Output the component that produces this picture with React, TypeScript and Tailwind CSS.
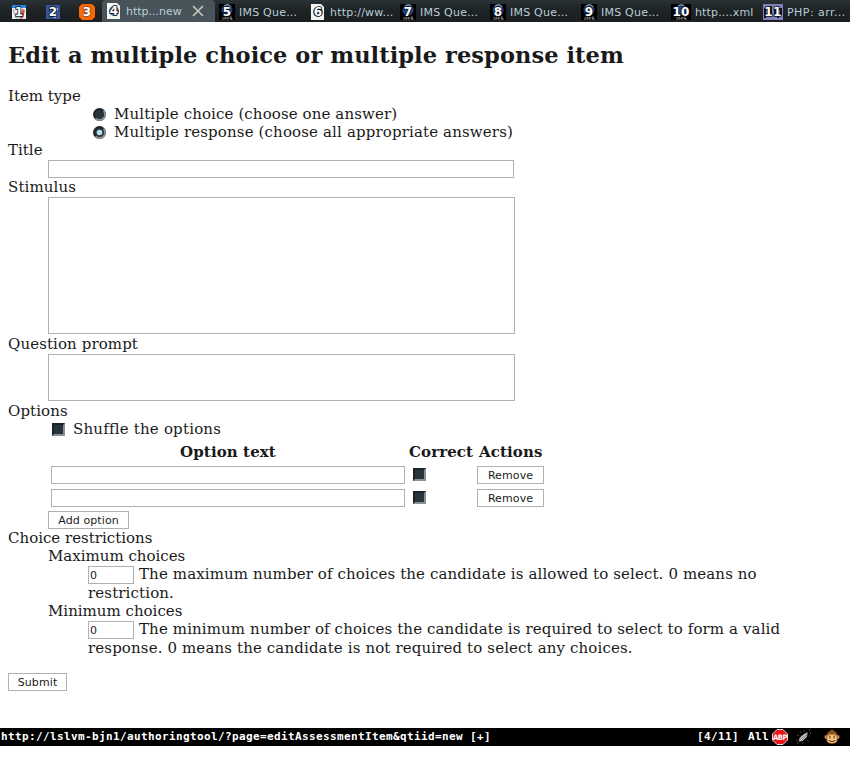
import type { ReactNode } from "react";

const sans = "font-['DejaVu_Sans',sans-serif]";
const field = "block border border-[#b0b0b0] bg-white outline-none resize-none rounded-none";
const button = `block h-[18px] border border-[#b0b0b0] bg-white pt-[1px] text-center text-[11px] leading-[15px] tracking-[0.1px] text-[#1a1a1a] ${sans}`;

function Favicon({ n, kind }: { n: number; kind: string }) {
  const wide = kind === "wide" || kind === "php";
  const mid = wide ? 10 : 8;
  return (
    <svg width={wide ? 20 : 16} height="16" viewBox={wide ? "0 0 20 16" : "0 0 16 16"} className="shrink-0">
      {kind === "mail" && (
        <>
          <rect x="1" y="2" width="14" height="13" fill="#eee" />
          <path d="M1 1h14v3H1z" fill="#2489e8" />
          <path d="M11 5l3 1-2 8-3 1z" fill="#d65347" />
          <path d="M2 5l3 9h4" stroke="#8dacbe" fill="none" />
        </>
      )}
      {kind === "blue" && (
        <>
          <rect x="1" y="1" width="14" height="14" fill="#35559b" />
          <path d="M10 4h3v2h-2v8H9V8" fill="#a8bad8" />
        </>
      )}
      {kind === "orange" && <path d="M3 0h10l3 3v10l-3 3H3l-3-3V3z" fill="#ff6600" />}
      {kind === "page" && (
        <>
          <path d="M1 0h10l3 3v13H1z" fill="#f5f5ef" />
          <circle cx="8" cy="8" r="5" fill="#4a6fae" />
          <path d="M5 5l5-2 3 4-2 5-4-1z" fill="#91764e" />
        </>
      )}
      {(kind === "ims" || kind === "wide") && (
        <>
          <rect width="20" height="16" fill="#000" />
          <circle cx={mid} cy="6" r="5.5" fill="#214484" />
          <path d={wide ? "M7 2q5-3 7 1" : "M5 2q5-3 7 1"} stroke="#a9bdd0" fill="none" />
          <path d={`M${mid - 4} 13v3m2 0v-3l1.500 2 1.500-2v3m4-3h-2v1.500h2V16h-2`} stroke="#999" strokeWidth=".8" fill="none" />
        </>
      )}
      {kind === "php" && (
        <>
          <rect width="20" height="16" fill="#8180bd" />
          <path d="M2 14V5h3v5H2M15 14V5h3v5h-3M8 2v9M12 4v7" stroke="#111" strokeWidth="2" fill="none" />
        </>
      )}
      <text
        x={mid}
        y="12"
        textAnchor="middle"
        fontSize="12"
        fontWeight="bold"
        fontFamily="DejaVu Sans"
        fill="white"
        stroke={kind === "orange" ? "#84512d" : "#08101c"}
        strokeWidth="1.6"
        paintOrder="stroke"
      >
        {n}
      </text>
    </svg>
  );
}

function Tab({ n, kind, children, className }: { n: number; kind: string; children?: ReactNode; className: string }) {
  return (
    <div className={`flex h-[22px] shrink-0 items-start ${className}`}>
      <Favicon n={n} kind={kind} />
      {children && <span className="mt-[1px] whitespace-nowrap text-[11px] leading-[16px] text-[#b9cdd8]">{children}</span>}
    </div>
  );
}

function Check() {
  return <span className="block h-[13px] w-[13px] shrink-0 border-2 border-t-[#1b2328] border-l-[#1b2328] border-r-[#8b9093] border-b-[#8b9093] bg-[#28353d]" />;
}

function Radio({ checked }: { checked?: boolean }) {
  return (
    <svg width="13" height="13" viewBox="0 0 13 13" className="shrink-0">
      <circle cx="6.5" cy="6.5" r="6.5" fill="#1b2328" />
      <path d="M11.1 1.9A6.5 6.5 0 0 1 1.9 11.1z" fill="#8b9093" />
      <circle cx="6.5" cy="6.5" r="4.6" fill="#28353d" />
      {checked && <circle cx="6.5" cy="6.5" r="2.8" fill="#b8dcf0" />}
    </svg>
  );
}

function OptionRow() {
  return (
    <div className="flex h-[18px] items-center">
      <input className={`${field} h-[18px] w-[354px]`} />
      <span className="ml-2 mb-[1px] w-[64px]"><Check /></span>
      <button className={`${button} w-[67px]`}>Remove</button>
    </div>
  );
}

function Limit({ name, first, second }: { name: string; first: string; second: string }) {
  return (
    <>
      <div className="pl-10">{name}</div>
      <div className="flex h-[19px] pl-20">
        <input className={`${field} mt-[1px] h-[18px] w-[46px] px-[1px] pt-[1px] text-[11px] text-[#1a1a1a] ${sans}`} defaultValue="0" />
        <span className="ml-[5px] whitespace-nowrap tracking-[0.12px]">{first}</span>
      </div>
      <div className="whitespace-nowrap pl-20 tracking-[0.13px]">{second}</div>
    </>
  );
}

export default function App() {
  return (
    <div className="h-[762px] w-[850px] overflow-hidden bg-white font-['DejaVu_Serif',serif] text-[15px] leading-[18px] text-[#1a1a1a]">
      <nav className={`flex h-[22px] w-full overflow-hidden bg-gradient-to-b from-[#2a3235] via-[#1d2224] to-[#1b1f21] ${sans}`}>
        <Tab n={1} kind="mail" className="w-[45px] pt-1 pl-[11px]" />
        <Tab n={2} kind="blue" className="w-[34px] pt-1" />
        <Tab n={3} kind="orange" className="w-[23px] pt-1" />
        <div className="flex w-[113px] shrink-0 rounded-t bg-[#48545a]">
          <Tab n={4} kind="page" className="gap-[4px] pt-[3px] pl-[4px]">http...new</Tab>
          <svg width="12" height="12" viewBox="0 0 12 12" className="mt-[5px] ml-[10px]">
            <path d="M1 1l10 10M11 1L1 11" stroke="#c8c8bd" strokeWidth="1.6" />
          </svg>
        </div>
        <Tab n={5} kind="ims" className="w-[91px] gap-[4px] pt-1 pl-[4px] tracking-[0.22px]">IMS Que...</Tab>
        <Tab n={6} kind="page" className="w-[90px] gap-[4px] pt-1 pl-[4px] tracking-[0.2px]">http://ww...</Tab>
        <Tab n={7} kind="ims" className="w-[90px] gap-[4px] pt-1 pl-[4px] tracking-[0.22px]">IMS Que...</Tab>
        <Tab n={8} kind="ims" className="w-[91px] gap-[4px] pt-1 pl-[4px] tracking-[0.22px]">IMS Que...</Tab>
        <Tab n={9} kind="ims" className="w-[90px] gap-[4px] pt-1 pl-[4px] tracking-[0.22px]">IMS Que...</Tab>
        <Tab n={10} kind="wide" className="w-[92px] gap-[4px] pt-1 pl-[4px] tracking-[0.15px]">http....xml</Tab>
        <Tab n={11} kind="php" className="w-[91px] gap-[4px] pt-1 pl-[4px] tracking-[0.45px]">PHP: arr...</Tab>
      </nav>

      <main className="h-[706px] px-2 pt-[19px]">
        <h1 className="mb-[18px] h-[28px] whitespace-nowrap text-[22.5px] leading-[28px] font-bold tracking-[0.075px]">Edit a multiple choice or multiple response item</h1>
        <div>Item type</div>
        <div className="flex h-[18px] items-center gap-2 pl-[85px]"><Radio /><span className="tracking-[0.11px]">Multiple choice (choose one answer)</span></div>
        <div className="flex h-[18px] items-center gap-2 pl-[85px]"><Radio checked /><span className="tracking-[0.14px]">Multiple response (choose all appropriate answers)</span></div>
        <div>Title</div>
        <input className={`${field} mt-[1px] ml-10 h-[18px] w-[466px]`} />
        <div className="tracking-[0.1px]">Stimulus</div>
        <textarea className={`${field} mt-[1px] mb-[1px] ml-10 h-[137px] w-[467px]`} />
        <div className="tracking-[0.1px]">Question prompt</div>
        <textarea className={`${field} mt-[1px] mb-[1px] ml-10 h-[47px] w-[467px]`} />
        <div className="tracking-[0.1px]">Options</div>
        <div className="flex h-[18px] items-center gap-2 pl-11"><Check /><span className="tracking-[0.2px]">Shuffle the options</span></div>
        <div className="mt-[5px] ml-[43px] flex flex-col gap-[5px]">
          <div className="flex h-[18px] font-bold tracking-[0.1px]">
            <span className="w-[354px] text-center">Option text</span>
            <span className="ml-1 w-[70px]">Correct</span>
            <span>Actions</span>
          </div>
          <OptionRow />
          <OptionRow />
        </div>
        <button className={`${button} mt-1 ml-10 w-[81px]`}>Add option</button>
        <div>Choice restrictions</div>
        <Limit name="Maximum choices" first="The maximum number of choices the candidate is allowed to select. 0 means no" second="restriction." />
        <Limit name="Minimum choices" first="The minimum number of choices the candidate is required to select to form a valid" second="response. 0 means the candidate is not required to select any choices." />
        <button className={`${button} mt-4 w-[59px]`}>Submit</button>
      </main>

      <footer className="flex h-[18px] items-center bg-black pl-[1px] font-['DejaVu_Sans_Mono',monospace] text-[11px] font-bold tracking-[0.378px] text-white">
        <span className="w-[696px] whitespace-pre">http://lslvm-bjn1/authoringtool/?page=editAssessmentItem&amp;qtiid=new [+]</span>
        <span className="mr-[5px]">[4/11]</span>
        <span className="ml-1 whitespace-pre">All</span>
        <svg width="16" height="16" viewBox="0 0 16 16" className="ml-[3px] shrink-0">
          <path d="M5 .5h6L15.500 5v6L11 15.500H5L.5 11V5z" fill="#ed1515" stroke="#d9d9d9" />
          <text x="8" y="10.700" textAnchor="middle" fontFamily="DejaVu Sans Condensed" fontWeight="bold" fontSize="7.500" letterSpacing="-.5" fill="white">ABP</text>
        </svg>
        <svg width="17" height="16" viewBox="0 0 17 16" className="ml-[7px] shrink-0">
          <path d="M5 2l1 2M2 6l2 1M1 11h2M7 15l1-2M12 11l2 2M14 7h1M9 1v2" stroke="#444" />
          <path d="M4 13q-1-3 2-6l6-4q2 3-2 7-3 3-6 3z" fill="#888" />
          <path d="M5 12l7-8M5 10l5-5M7 12l5-5" stroke="#ddd" strokeWidth=".8" />
          <path d="M14 1h1M15 4h1M2 14h1" stroke="#777" />
        </svg>
        <svg width="16" height="16" viewBox="0 0 16 16" className="ml-[12px] shrink-0">
          <circle cx="2.500" cy="8" r="2" fill="#d79958" />
          <circle cx="13.500" cy="8" r="2" fill="#d79958" />
          <path d="M2.500 7q0-5 5.500-5 5.500 0 5.500 5v5q-2 3-5.500 3t-5.500-3z" fill="#8e4f1a" />
          <path d="M3.500 7q2-3 4.500-1 2.500-2 4.500 1v2q2 5-4.500 5t-4.500-5z" fill="#f8ca83" />
          <path d="M6 6.500v3M10 6.500v3M4.500 11.500q3.500 2 7 0" stroke="#352011" fill="none" />
          <path d="M6 2l2-1 2 1" stroke="#a85e22" fill="none" />
        </svg>
      </footer>
    </div>
  );
}
